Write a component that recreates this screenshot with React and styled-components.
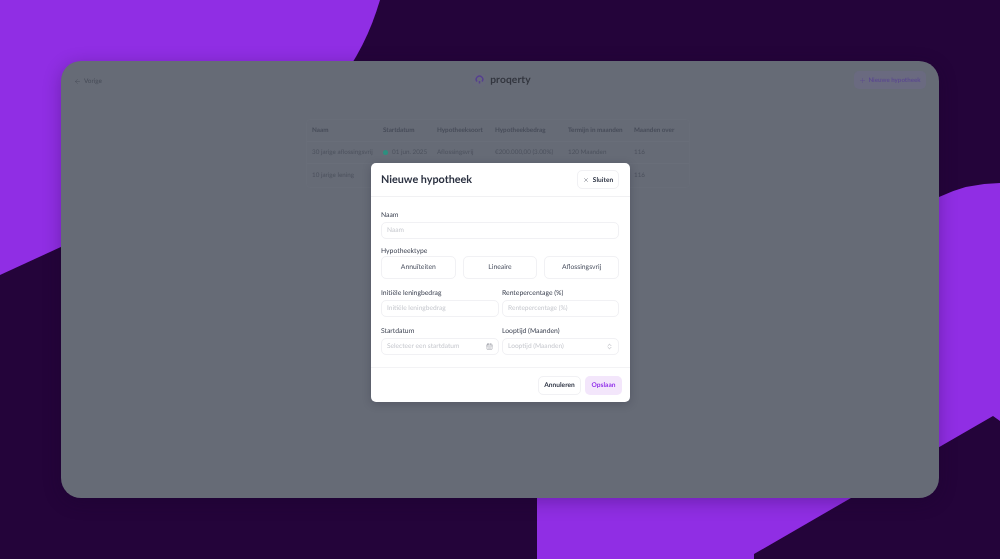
import React from 'react';
import styled, { createGlobalStyle } from 'styled-components';
import { ArrowLeft, Plus, X, CalendarDays, ChevronsUpDown } from 'lucide-react';

const Global = createGlobalStyle`
  html, body { margin: 0; height: 100%; }
  body {
    background: #24043a;
    font-family: Lato, "Liberation Sans", sans-serif;
    text-rendering: geometricPrecision;
    overflow: hidden;
  }
  button { text-rendering: geometricPrecision; }
  #root { height: 100%; }
`;

const Page = styled.div`
  position: relative;
  width: 1000px;
  height: 559px;
  padding: 61px;
  box-sizing: border-box;
  overflow: hidden;
`;

const Shapes = styled.svg`
  position: absolute;
  inset: 0;
`;

const Panel = styled.main`
  position: relative;
  height: 437px;
  border-radius: 20px;
  background: #666b76;
  box-shadow: 0 4px 18px rgba(20, 0, 40, 0.28);
  overflow: hidden;
`;

const Behind = styled.div`
  display: flex;
  flex-direction: column;
  align-items: center;
  filter: blur(0.4px);
`;

const TopBar = styled.header`
  width: 100%;
  box-sizing: border-box;
  height: 38px;
  padding: 2px 13px 0;
  display: grid;
  grid-template-columns: 1fr auto 1fr;
  align-items: center;
`;

const Back = styled.span`
  display: flex;
  align-items: center;
  gap: 3px;
  font-size: 6.4px;
  color: #474c58;
`;

const Logo = styled.div`
  display: flex;
  align-items: center;
  gap: 4px;
  font-size: 10.2px;
  font-weight: 700;
  letter-spacing: 0.15px;
  color: #33363f;
  margin-top: -2px;
  margin-left: 3px;
`;

const LogoMark = styled.span`
  width: 14px;
  height: 14px;
  border-radius: 5px;
  background: #676a79;
  display: grid;
  place-items: center;
`;

const NewButton = styled.button`
  justify-self: end;
  height: 18px;
  width: 72px;
  margin-top: -2px;
  border: 0;
  border-radius: 5px;
  background: #6a6a80;
  color: #5b4a8e;
  font: 700 6.2px Lato, sans-serif;
  display: flex;
  align-items: center;
  justify-content: center;
  gap: 2px;
  padding: 0;
`;

const Table = styled.div`
  width: 384px;
  margin: 19.5px 4px 0 0;
  border: 1px solid #686d78;
  border-radius: 4px;
  box-sizing: border-box;
`;

const Row = styled.div`
  display: grid;
  grid-template-columns: 71px 54px 58px 73px 66px 1fr;
  align-items: center;
  height: 22.4px;
  padding: 0 5px;
  font-size: 6.3px;
  font-weight: ${p => (p.$head ? 700 : 400)};
  color: ${p => (p.$head ? '#474c59' : '#4d525e')};
  border-bottom: 1px solid #696e79;
  box-sizing: border-box;
  &:last-child { border-bottom: 0; }
  span { white-space: nowrap; }
`;

const Dated = styled.span`
  display: flex;
  align-items: center;
  gap: 4px;
  &::before {
    content: '';
    flex: none;
    width: 5px;
    height: 5px;
    border-radius: 50%;
    background: #2d8f7f;
  }
`;

const Overlay = styled.div`
  position: absolute;
  inset: 0;
  padding: 102px 0 0 310px;
`;

const Modal = styled.section`
  width: 258.5px;
  height: 239px;
  background: #fff;
  border-radius: 5px;
  box-shadow: 0 2px 8px rgba(30, 30, 50, 0.25);
  display: flex;
  flex-direction: column;
  color: #454b59;
  filter: blur(0.22px);
`;

const ModalHead = styled.header`
  height: 34px;
  flex: none;
  box-sizing: border-box;
  padding: 0 10.5px 0 10px;
  display: flex;
  align-items: center;
  justify-content: space-between;
  border-bottom: 1px solid #f1f1f3;
`;

const Title = styled.h2`
  margin: 0;
  font-size: 10.8px;
  font-weight: 700;
  color: #2c3242;
`;

const Ghost = styled.button`
  height: 19px;
  padding: 0;
  width: ${p => p.$w}px;
  box-sizing: border-box;
  border: 1px solid #f1f1f4;
  border-radius: 5px;
  background: #fff;
  color: #2f3545;
  font: 700 6.6px Lato, sans-serif;
  display: flex;
  align-items: center;
  justify-content: center;
  gap: 4px;
`;

const Body = styled.div`
  flex: 1;
  padding: 14.5px 10.5px 0 10px;
  display: flex;
  flex-direction: column;
`;

const Field = styled.div`
  display: flex;
  flex-direction: column;
  gap: ${p => p.$gap ?? 4.5}px;
  margin-bottom: ${p => p.$mb ?? 0}px;
  min-width: 0;
`;

const Label = styled.label`
  font-size: 6.8px;
  line-height: 6px;
  font-weight: 400;
  color: #3d4352;
`;

const InputBox = styled.div`
  height: 16.5px;
  box-sizing: border-box;
  border: 1px solid #f1f1f4;
  border-radius: 5px;
  padding: 0 5px;
  display: flex;
  align-items: center;
  justify-content: space-between;
  color: #c6c8ce;
  font-size: 6.6px;
  svg { color: #80848f; }
`;

const Options = styled.div`
  display: grid;
  grid-template-columns: repeat(3, 1fr);
  gap: 7px;
`;

const Option = styled.div`
  height: 22.5px;
  box-sizing: border-box;
  border: 1px solid #f1f1f4;
  border-radius: 5px;
  display: grid;
  place-items: center;
  color: #4b5160;
  font-size: 6.8px;
`;

const Pair = styled.div`
  display: grid;
  grid-template-columns: 117.5px 117px;
  gap: 3.5px;
  margin-bottom: ${p => p.$mb ?? 0}px;
`;

const Foot = styled.footer`
  height: 34px;
  flex: none;
  border-top: 1px solid #f3f3f5;
  display: flex;
  justify-content: flex-end;
  align-items: center;
  gap: 4px;
  padding-right: 7.5px;
`;

const Save = styled.button`
  width: 37px;
  height: 19px;
  padding: 0;
  border: 0;
  border-radius: 5px;
  background: #f3e6fb;
  color: #9333ea;
  font: 700 6.6px Lato, sans-serif;
`;

const rows = [
  ['30 jarige aflossingsvrij', '01 jun. 2025', 'Aflossingsvrij', '€200.000,00 (3.00%)', '120 Maanden', '116'],
  ['10 jarige lening', '', '', '', '', '116'],
];

export default function App() {
  return (
    <Page>
      <Global />
      <Shapes width="1000" height="559" viewBox="0 0 1000 559">
        <path fill="#902ee4" d="M0 0H380C362 62 320 122 250 160L0 275Z" />
        <path fill="#902ee4" d="M537 559V320H800L939 197Q968 183 1000 183V421L993 416L754 554V559Z" />
      </Shapes>
      <Panel>
        <Behind>
          <TopBar>
            <Back><ArrowLeft size={7} strokeWidth={1.5} />Vorige</Back>
            <Logo>
              <LogoMark>
                <svg width="9" height="10" viewBox="0 0 18 20" fill="none" stroke="#56408f" strokeWidth="3">
                  <path d="M4 13A6.5 6.5 0 1 1 14 13" />
                  <path d="M9 12V17" />
                </svg>
              </LogoMark>
              proqerty
            </Logo>
            <NewButton><Plus size={7} strokeWidth={1.5} />Nieuwe hypotheek</NewButton>
          </TopBar>
          <Table>
            <Row $head>
              <span>Naam</span><span>Startdatum</span><span>Hypotheeksoort</span>
              <span>Hypotheekbedrag</span><span>Termijn in maanden</span><span>Maanden over</span>
            </Row>
            {rows.map(r => (
              <Row key={r[0]}>
                <span>{r[0]}</span>
                {r[1] ? <Dated>{r[1]}</Dated> : <span />}
                <span>{r[2]}</span><span>{r[3]}</span><span>{r[4]}</span><span>{r[5]}</span>
              </Row>
            ))}
          </Table>
        </Behind>
        <Overlay>
          <Modal>
            <ModalHead>
              <Title>Nieuwe hypotheek</Title>
              <Ghost $w={42}><X size={6} strokeWidth={1.5} />Sluiten</Ghost>
            </ModalHead>
            <Body>
              <Field $mb={9}>
                <Label>Naam</Label>
                <InputBox>Naam</InputBox>
              </Field>
              <Field $gap={2.5} $mb={11}>
                <Label>Hypotheektype</Label>
                <Options>
                  <Option>Annuïteiten</Option>
                  <Option>Lineaire</Option>
                  <Option>Aflossingsvrij</Option>
                </Options>
              </Field>
              <Pair $mb={11}>
                <Field><Label>Initiële leningbedrag</Label><InputBox>Initiële leningbedrag</InputBox></Field>
                <Field><Label>Rentepercentage (%)</Label><InputBox>Rentepercentage (%)</InputBox></Field>
              </Pair>
              <Pair>
                <Field>
                  <Label>Startdatum</Label>
                  <InputBox>Selecteer een startdatum<CalendarDays size={7} strokeWidth={1.5} /></InputBox>
                </Field>
                <Field>
                  <Label>Looptijd (Maanden)</Label>
                  <InputBox>Looptijd (Maanden)<ChevronsUpDown size={7} strokeWidth={1.5} /></InputBox>
                </Field>
              </Pair>
            </Body>
            <Foot>
              <Ghost $w={43}>Annuleren</Ghost>
              <Save>Opslaan</Save>
            </Foot>
          </Modal>
        </Overlay>
      </Panel>
    </Page>
  );
}
